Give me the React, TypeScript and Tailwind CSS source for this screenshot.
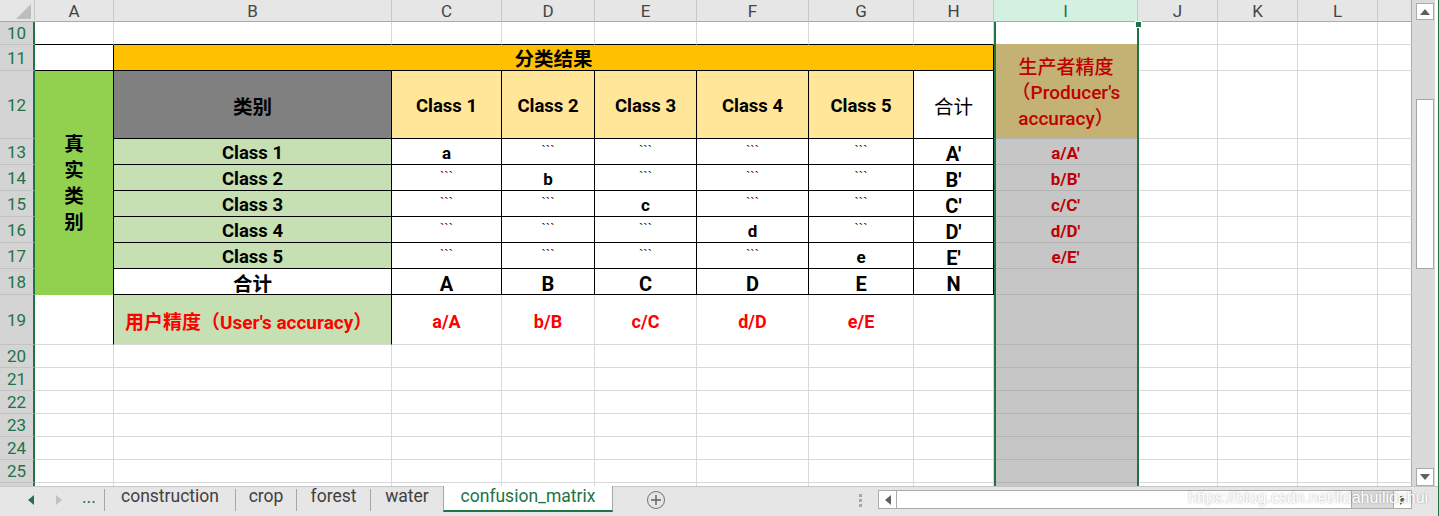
import type { ReactNode } from "react"

// cell borders: right / bottom colours
const base = "flex items-center justify-center border-r border-b whitespace-nowrap leading-none pt-[4px]"
const gg = "border-r-[#d9d9d9] border-b-[#d9d9d9]"
const kk = "border-r-black border-b-black"
const kg = "border-r-black border-b-[#d9d9d9]"
const gk = "border-r-[#d9d9d9] border-b-black"
const sel = "bg-[#c6c6c6] border-r-[#c6c6c6] border-b-[#b3b3b3]"
const edge = "border-r-[#ababab] border-b-[#d9d9d9]"

const heads = ["A", "B", "C", "D", "E", "F", "G", "H", "I", "J", "K", "L", ""]

const matrix = [
  { label: "Class 1", diag: "a", total: "A'", prod: "a/A'" },
  { label: "Class 2", diag: "b", total: "B'", prod: "b/B'" },
  { label: "Class 3", diag: "c", total: "C'", prod: "c/C'" },
  { label: "Class 4", diag: "d", total: "D'", prod: "d/D'" },
  { label: "Class 5", diag: "e", total: "E'", prod: "e/E'" },
]

const Cell = ({ c = "", children }: { c?: string; children?: ReactNode }) => (
  <div className={`${base} ${c}`}>{children}</div>
)

const RowHead = ({ n }: { n?: number }) => (
  <div className="flex items-center justify-center pt-px bg-[#d4d4d4] border-r-2 border-r-[#217346] border-b border-b-[#c2c2c2] text-[17px] leading-none text-[#217346]">
    {n}
  </div>
)

const Tail = () => (
  <>
    <Cell c={gg} />
    <Cell c={gg} />
    <Cell c={gg} />
    <Cell c={edge} />
  </>
)

const Tri = ({ dir, color }: { dir: "l" | "r" | "u" | "d"; color: string }) => {
  const pts = {
    l: "6,0 6,10 0,5",
    r: "0,0 0,10 6,5",
    u: "0,6 10,6 5,0",
    d: "0,0 10,0 5,6",
  }[dir]
  const side = dir === "l" || dir === "r"
  return (
    <svg width={side ? 6 : 10} height={side ? 10 : 6} viewBox={side ? "0 0 6 10" : "0 0 10 6"}>
      <polygon points={pts} fill={color} />
    </svg>
  )
}

const Ticks = () => (
  <span className="font-['Liberation_Sans',Arial,sans-serif] text-[13px] -mt-[6px]">```</span>
)

const Sheet = () => (
  <div className="relative w-[1412px] h-[486px] overflow-hidden bg-white">
    <div className="grid grid-cols-[35px_79px_278px_110px_93px_102px_112px_105px_80px_144px_80px_80px_80px_34px] grid-rows-[22px_23px_26px_68px_26px_26px_26px_26px_26px_26px_50px_23px_23px_23px_23px_23px_23px_23px]">
      {/* column headers */}
      <div className="relative bg-[#e6e6e6] border-r border-r-[#c8c8c8] border-b border-b-[#ababab]">
        <svg className="absolute left-[16px] top-[4px]" width="15" height="15" viewBox="0 0 15 15">
          <polygon points="15,0 15,15 0,15" fill="#bdbdbd" />
        </svg>
      </div>
      {heads.map((h, i) => (
        <div
          key={i}
          className={`flex items-center justify-center pt-[2px] leading-none border-r border-b border-b-[#ababab] text-[17px] ${
            h === "I"
              ? "bg-[#d3f0e0] text-[#217346] border-r-[#c8c8c8]"
              : h === ""
                ? "bg-[#e6e6e6] border-r-[#ababab]"
                : "bg-[#e6e6e6] text-[#444] border-r-[#c8c8c8]"
          }`}
        >
          {h}
        </div>
      ))}

      {/* row 10 */}
      <RowHead n={10} />
      {Array.from({ length: 8 }).map((_, i) => (
        <Cell key={i} c={gk} />
      ))}
      <Cell c="border-r-[#d9d9d9] border-b-[#c4b274]" />
      <Tail />

      {/* row 11 */}
      <RowHead n={11} />
      <Cell c={kk} />
      <Cell c={`col-span-7 bg-[#ffc000] ${kk} text-[19.5px] font-bold pt-[5px]`}>分类结果</Cell>
      <div className="row-span-2 flex flex-col items-center justify-center pt-[3px] bg-[#c4b274] border-b border-b-[#b3b3b3] text-[19px] leading-[25.5px] font-medium text-[#c00000] whitespace-nowrap">
        <span>生产者精度</span>
        <span>（Producer's</span>
        <span>accuracy）</span>
      </div>
      <Tail />

      {/* row 12 */}
      <RowHead n={12} />
      <div className="row-span-7 flex flex-col items-center justify-center pt-[2px] bg-[#92d050] border-r border-r-black text-[19.5px] leading-[26px] font-bold">
        <span>真</span>
        <span>实</span>
        <span>类</span>
        <span>别</span>
      </div>
      <Cell c={`bg-[#808080] ${kk} text-[19.5px] font-bold pt-[6px]`}>类别</Cell>
      {[1, 2, 3, 4, 5].map((n) => (
        <Cell key={n} c={`bg-[#ffe699] ${kk} text-[18.5px] font-bold`}>
          Class {n}
        </Cell>
      ))}
      <Cell c={`${kk} text-[19.5px] pt-[6px]`}>合计</Cell>
      <Tail />

      {/* rows 13-17 */}
      {matrix.map((r, i) => (
        <div key={r.label} className="contents">
          <RowHead n={13 + i} />
          <Cell c={`bg-[#c6e0b4] ${kk} text-[18.5px] font-bold`}>{r.label}</Cell>
          {[0, 1, 2, 3, 4].map((j) =>
            j === i ? (
              <Cell key={j} c={`${kk} text-[17px] font-bold`}>
                {r.diag}
              </Cell>
            ) : (
              <Cell key={j} c={kk}>
                <Ticks />
              </Cell>
            ),
          )}
          <Cell c={`${kk} text-[20px] font-bold`}>{r.total}</Cell>
          <Cell c={`${sel} text-[17px] font-bold text-[#c00000]`}>{r.prod}</Cell>
          <Tail />
        </div>
      ))}

      {/* row 18 */}
      <RowHead n={18} />
      <Cell c={`${kk} text-[19.5px] font-bold pt-[6px]`}>合计</Cell>
      {["A", "B", "C", "D", "E", "N"].map((t) => (
        <Cell key={t} c={`${kk} text-[20px] font-bold`}>
          {t}
        </Cell>
      ))}
      <Cell c={sel} />
      <Tail />

      {/* row 19 */}
      <RowHead n={19} />
      <Cell c={kg} />
      <Cell c={`bg-[#c6e0b4] ${kg} justify-start pl-[11px] pt-[5px] text-[19px] font-bold text-[#ff0000]`}>
        用户精度（User's accuracy）
      </Cell>
      {["a/A", "b/B", "c/C", "d/D", "e/E"].map((t) => (
        <Cell key={t} c={`${gg} text-[18px] font-bold text-[#ff0000]`}>
          {t}
        </Cell>
      ))}
      <Cell c={gg} />
      <Cell c={sel} />
      <Tail />

      {/* rows 20-26 (26 only shows as a sliver) */}
      {[20, 21, 22, 23, 24, 25, 26].map((n) => (
        <div key={n} className="contents">
          <RowHead n={n < 26 ? n : undefined} />
          {Array.from({ length: 8 }).map((_, i) => (
            <Cell key={i} c={gg} />
          ))}
          <Cell c={sel} />
          <Tail />
        </div>
      ))}
    </div>

    {/* column I selection outline */}
    <div className="pointer-events-none absolute left-[994px] top-[22px] w-[145px] h-[464px] border-x-2 border-[#217346]" />
    <div className="pointer-events-none absolute left-[1135px] top-[21px] w-[7px] h-[7px] bg-[#217346] border border-white" />
  </div>
)

const VScroll = () => (
  <div className="flex h-[486px]">
    <div className="w-[23px] h-full bg-[#dadada] flex flex-col pl-[4px] pr-px">
      <div className="mt-[3px] h-[17px] bg-white border border-[#ababab] flex items-center justify-center">
        <Tri dir="u" color="#606060" />
      </div>
      <div className="mt-[79px] h-[170px] bg-white border border-[#a6a6a6]" />
      <div className="mt-auto h-[18px] bg-white border border-[#ababab] flex items-center justify-center">
        <Tri dir="d" color="#606060" />
      </div>
    </div>
    <div className="w-[3px] h-full bg-white" />
  </div>
)

const TabBar = () => (
  <div className="relative h-[30px] flex items-start border-t border-t-[#c6c6c6] text-[17.5px] leading-none text-[#404040]">
    <div className="w-[104px] h-[26px] flex items-center">
      <div className="w-[28px]" />
      <Tri dir="l" color="#217346" />
      <div className="w-[22px]" />
      <Tri dir="r" color="#c0c0c0" />
      <div className="w-[20px]" />
      <span className="text-[#217346] pb-[4px]">...</span>
    </div>
    <div className="w-px h-[22px] mt-[2px] bg-[#a6a6a6]" />
    <div className="w-[130px] h-[24px] flex items-center justify-center pb-[4px]">construction</div>
    <div className="w-px h-[22px] mt-[2px] bg-[#a6a6a6]" />
    <div className="w-[60px] h-[24px] flex items-center justify-center pb-[4px]">crop</div>
    <div className="w-px h-[22px] mt-[2px] bg-[#a6a6a6]" />
    <div className="w-[73px] h-[24px] flex items-center justify-center pb-[4px]">forest</div>
    <div className="w-px h-[22px] mt-[2px] bg-[#a6a6a6]" />
    <div className="w-[72px] h-[24px] flex items-center justify-center pb-[4px]">water</div>
    <div className="w-[170px] h-[26px] -mt-px flex items-center justify-center pb-[3px] bg-white border-x border-x-[#a6a6a6] border-b-2 border-b-[#217346] text-[#217346]">
      confusion_matrix
    </div>
    <div className="w-[265px] h-[26px] flex items-center">
      <div className="ml-[34px] w-[18px] h-[18px] rounded-full border border-[#707070] flex items-center justify-center">
        <svg width="10" height="10" viewBox="0 0 10 10">
          <path d="M5 0V10M0 5H10" stroke="#606060" strokeWidth="1.4" />
        </svg>
      </div>
      <div className="ml-[194px] flex flex-col gap-[2px]">
        <div className="w-[3px] h-[3px] bg-[#a6a6a6]" />
        <div className="w-[3px] h-[3px] bg-[#a6a6a6]" />
        <div className="w-[3px] h-[3px] bg-[#a6a6a6]" />
      </div>
    </div>
    <div className="w-[534px] h-[19px] mt-[3px] flex border border-[#ababab] bg-[#dadada]">
      <div className="w-[18px] bg-white border-r border-r-[#ababab] flex items-center justify-center">
        <Tri dir="l" color="#606060" />
      </div>
      <div className="w-[455px] bg-white border-r border-r-[#ababab]" />
      <div className="flex-1" />
      <div className="w-[18px] bg-white border-l border-l-[#ababab] flex items-center justify-center">
        <Tri dir="r" color="#606060" />
      </div>
    </div>
    <span className="absolute left-[1188px] top-[3px] text-[16px] font-['Liberation_Sans',Arial,sans-serif] text-white [text-shadow:0_0_2px_rgba(0,0,0,0.35)]">
      https://blog.csdn.net/lidahuilidahui
    </span>
  </div>
)

export default function App() {
  return (
    <div className="w-[1439px] h-[516px] overflow-hidden bg-[#e6e6e6] border-r border-r-[#217346] font-['Roboto','Noto_Sans_CJK_SC',sans-serif] text-black">
      <div className="flex">
        <Sheet />
        <VScroll />
      </div>
      <TabBar />
    </div>
  )
}
